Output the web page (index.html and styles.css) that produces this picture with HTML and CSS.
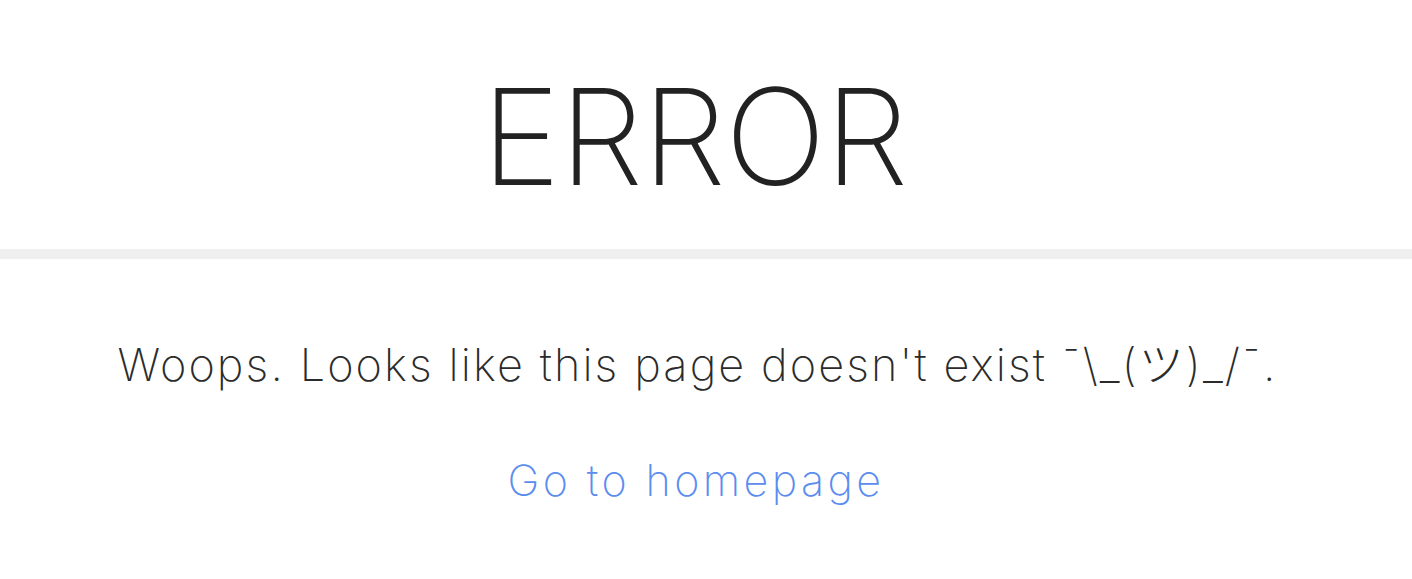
FILE: index.html
```html
<!DOCTYPE html>
<html lang="en">
<head>
<meta charset="utf-8">
<title>Error</title>
<link rel="stylesheet" href="styles.css">
</head>
<body>
<header class="hero">
  <h1 class="hero-title">ERROR</h1>
</header>
<main class="content">
  <p class="message">Woops. Looks like this page doesn't exist ¯\_(ツ)_/¯.</p>
  <a class="home-link" href="#">Go to homepage</a>
</main>
</body>
</html>
```
FILE: styles.css
```css
html, body {
  margin: 0;
  padding: 0;
  background: #ffffff;
}

body {
  font-family: "Inter", "Noto Sans CJK JP", sans-serif;
  color: #2b2b2b;
}

.hero {
  display: flex;
  justify-content: center;
  padding: 69px 23px 46px 0;
  border-bottom: 10px solid #efefef;
}

.hero-title {
  margin: 0;
  font-size: 134px;
  line-height: 134px;
  font-weight: 200;
  color: #222222;
  letter-spacing: -1px;
}

.content {
  display: flex;
  flex-direction: column;
  align-items: center;
  padding: 83px 17px 40px 0;
}

.message {
  margin: 0;
  font-size: 45px;
  line-height: 45px;
  font-weight: 200;
  letter-spacing: 2.1px;
  color: #2b2b2b;
}

.home-link {
  display: block;
  margin-top: 67px;
  padding-right: 3px;
  font-size: 43px;
  line-height: 52px;
  font-weight: 200;
  letter-spacing: 3.4px;
  color: #5b8def;
  text-decoration: none;
}
```
